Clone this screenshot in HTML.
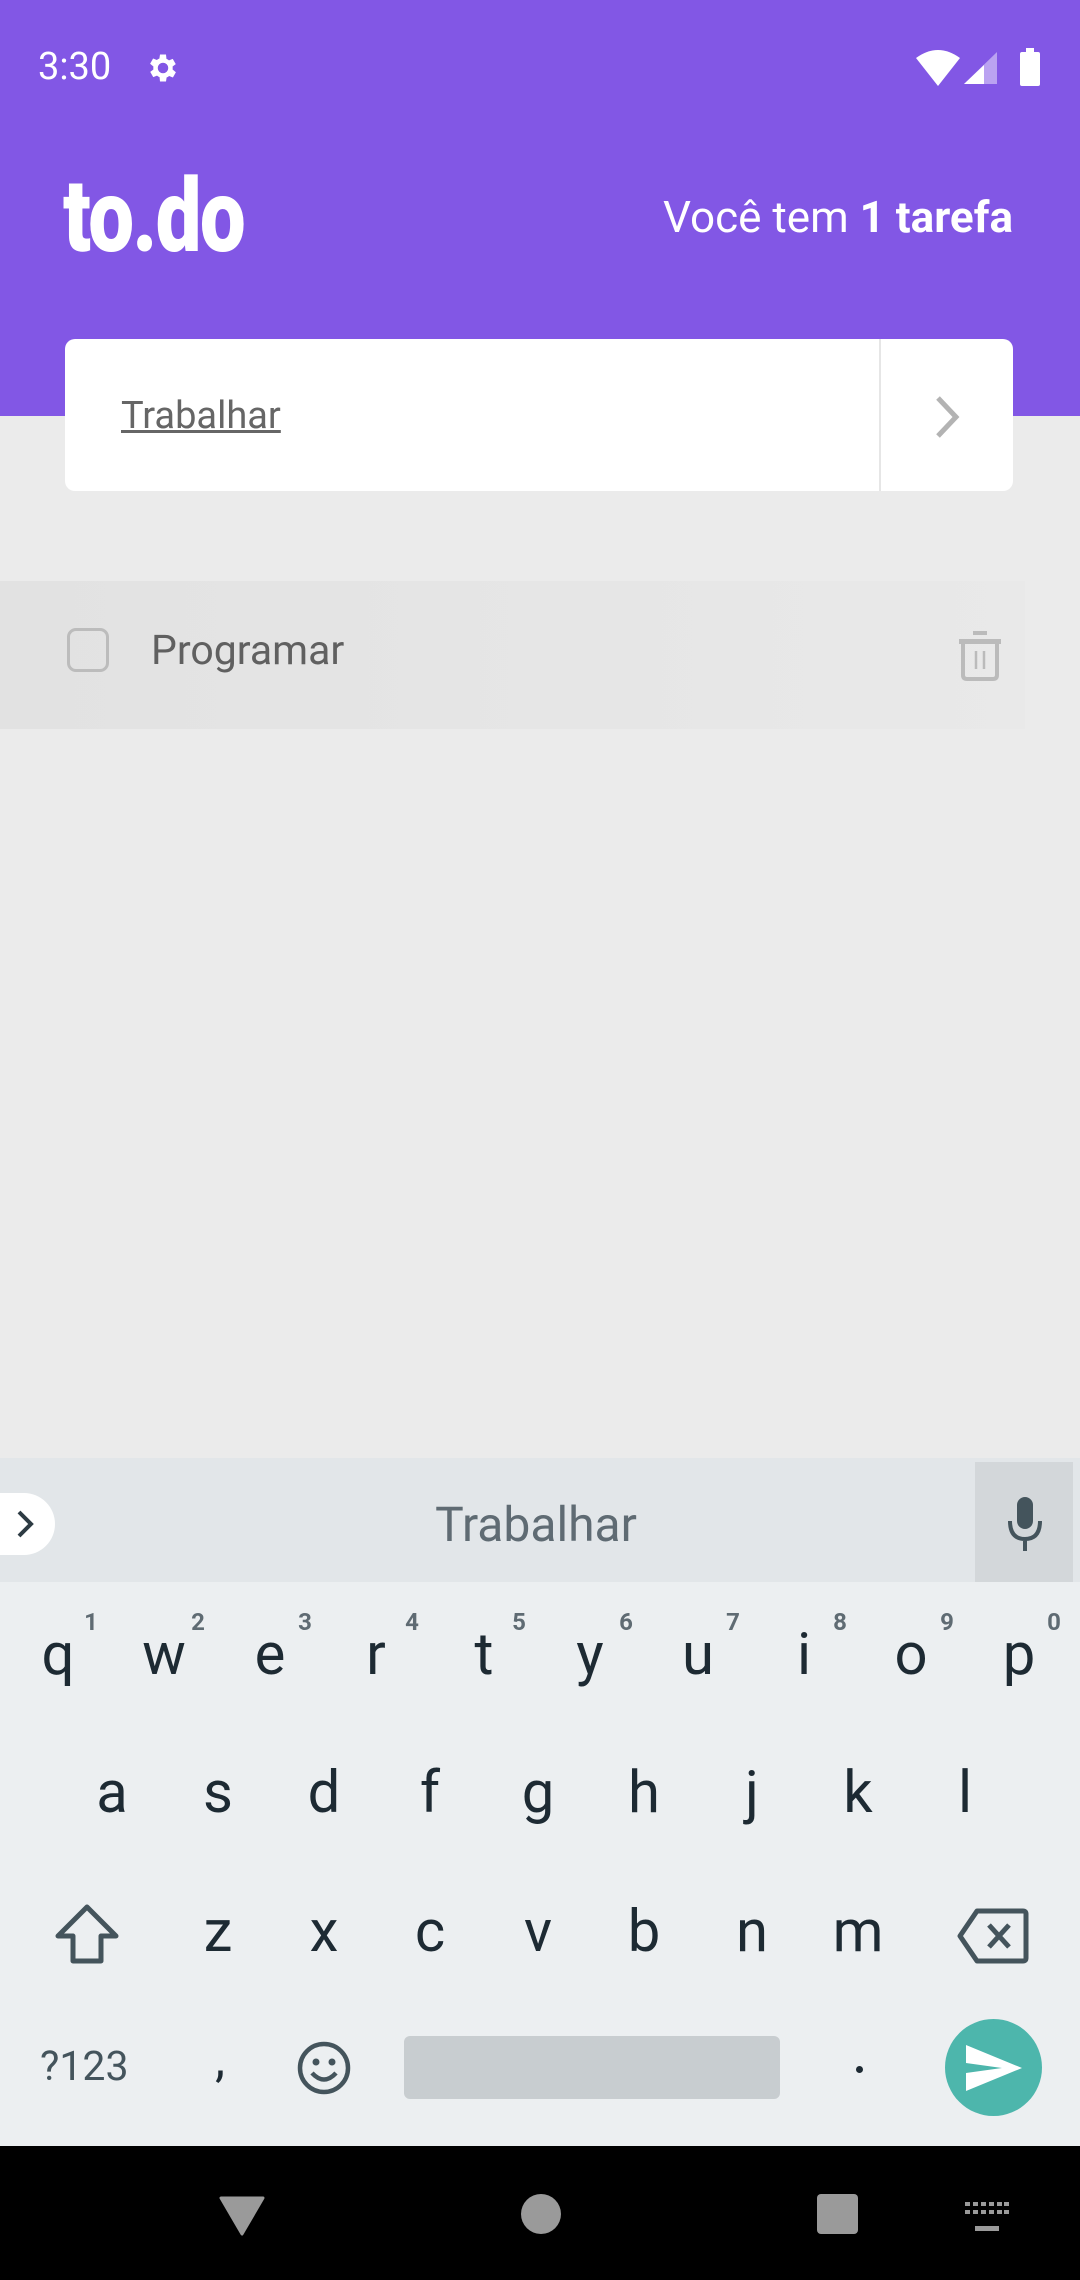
<!DOCTYPE html>
<html><head><meta charset="utf-8"><style>
*{margin:0;padding:0;box-sizing:border-box}
body{width:1080px;height:2280px;position:relative;background:#ebebeb;font-family:"Roboto","Liberation Sans",sans-serif;overflow:hidden}
.a{position:absolute}
.k{position:absolute;font-size:58px;color:#1d2a33;transform:translate(-50%,-50%);line-height:1}
.n{position:absolute;font-size:24px;color:#5f6b73;transform:translate(-50%,-50%);line-height:1;font-weight:bold}
</style></head><body>
<div class="a" style="left:0;top:0;width:1080px;height:416px;background:#8257e5"></div>
<div class="a" style="left:38px;top:45px;font-size:38px;color:#fff">3:30</div>
<svg class="a" style="left:145px;top:50px" width="36" height="36" viewBox="0 0 24 24"><path fill="#fff" d="M19.4 13a7.5 7.5 0 0 0 0-2l2.1-1.6-2-3.5-2.5 1a7 7 0 0 0-1.7-1L15 3h-4l-.4 2.7a7 7 0 0 0-1.7 1l-2.5-1-2 3.5L6.6 11a7.5 7.5 0 0 0 0 2l-2.1 1.6 2 3.5 2.5-1a7 7 0 0 0 1.7 1L11 21h4l.4-2.7a7 7 0 0 0 1.7-1l2.5 1 2-3.5zM13 15.5a3.5 3.5 0 1 1 0-7 3.5 3.5 0 0 1 0 7z" transform="translate(-1 0)"/></svg>
<svg class="a" style="left:914px;top:48px" width="130" height="38" viewBox="0 0 130 38"><path d="M2 10 Q24 -6 46 10 L24 38Z" fill="#fff"/><path d="M50 36 L83 4 V36Z" fill="#fff" opacity=".45"/><path d="M50 36 L70 17 V36Z" fill="#fff"/><rect x="106" y="4" width="20" height="34" rx="2" fill="#fff"/><rect x="112" y="0" width="8" height="5" fill="#fff"/></svg>
<div class="a" style="left:63px;top:160px;font-size:102px;font-weight:900;color:#fff;transform:scaleX(.8);transform-origin:left;letter-spacing:-2px;line-height:1.1">to.do</div>
<div class="a" style="right:67px;top:191px;font-size:44px;color:#fff">Você tem <b>1 tarefa</b></div>
<div class="a" style="left:65px;top:339px;width:948px;height:152px;background:#fff;border-radius:10px"></div>
<div class="a" style="left:879px;top:339px;width:2px;height:152px;background:#e6e6e6"></div>
<svg class="a" style="left:930px;top:394px" width="34" height="46" viewBox="0 0 34 46"><path d="M8 4 L26 23 L8 42" stroke="#b3b3b3" stroke-width="5" fill="none"/></svg>
<div class="a" style="left:121px;top:394px;font-size:38px;color:#666;text-decoration:underline">Trabalhar</div>
<div class="a" style="left:0;top:581px;width:1025px;height:148px;background:linear-gradient(90deg,#e2e2e2,#e9e9e9)"></div>
<div class="a" style="left:67px;top:628px;width:42px;height:44px;border:3px solid #bcbcbc;border-radius:9px"></div>
<div class="a" style="left:151px;top:627px;font-size:41px;color:#606060">Programar</div>
<svg class="a" style="left:958px;top:631px" width="44" height="50" viewBox="0 0 44 50"><rect x="15" y="0" width="14" height="4" fill="#bbb"/><rect x="1" y="8" width="42" height="5" fill="#bbb"/><path d="M5 13 V44 Q5 48 9 48 H35 Q39 48 39 44 V13" stroke="#bbb" stroke-width="4" fill="none"/><path d="M18 20V38M26 20V38" stroke="#bbb" stroke-width="2.5"/></svg>

<div class="a" style="left:0;top:1458px;width:1080px;height:124px;background:#e2e6e9"></div>
<div class="a" style="left:975px;top:1462px;width:98px;height:120px;background:#d3d7da"></div>
<svg class="a" style="left:1005px;top:1495px" width="40" height="60" viewBox="0 0 40 60"><rect x="12" y="2" width="16" height="32" rx="8" fill="#44545c"/><path d="M5 26 Q5 44 20 44 Q35 44 35 26 M20 44 V56" stroke="#44545c" stroke-width="4" fill="none"/></svg>
<div class="a" style="left:-30px;top:1493px;width:85px;height:62px;background:#fff;border-radius:31px"></div>
<svg class="a" style="left:14px;top:1508px" width="24" height="32" viewBox="0 0 24 32"><path d="M5 4 L17 16 L5 28" stroke="#2d3b43" stroke-width="4" fill="none"/></svg>
<div class="a" style="left:0;top:1496px;width:1072px;text-align:center;font-size:48px;color:#5f6b73">Trabalhar</div>
<div class="a" style="left:0;top:1582px;width:1080px;height:564px;background:#eceff1"></div>

<div class="k" style="left:58px;top:1655px">q</div><div class="k" style="left:164px;top:1655px">w</div><div class="k" style="left:270px;top:1655px">e</div><div class="k" style="left:376px;top:1655px">r</div><div class="k" style="left:484px;top:1655px">t</div><div class="k" style="left:590px;top:1655px">y</div><div class="k" style="left:698px;top:1655px">u</div><div class="k" style="left:804px;top:1655px">i</div><div class="k" style="left:911px;top:1655px">o</div><div class="k" style="left:1019px;top:1655px">p</div>
<div class="n" style="left:91px;top:1622px">1</div><div class="n" style="left:198px;top:1622px">2</div><div class="n" style="left:305px;top:1622px">3</div><div class="n" style="left:412px;top:1622px">4</div><div class="n" style="left:519px;top:1622px">5</div><div class="n" style="left:626px;top:1622px">6</div><div class="n" style="left:733px;top:1622px">7</div><div class="n" style="left:840px;top:1622px">8</div><div class="n" style="left:947px;top:1622px">9</div><div class="n" style="left:1054px;top:1622px">0</div>
<div class="k" style="left:112px;top:1793px">a</div><div class="k" style="left:218px;top:1793px">s</div><div class="k" style="left:324px;top:1793px">d</div><div class="k" style="left:430px;top:1793px">f</div><div class="k" style="left:538px;top:1793px">g</div><div class="k" style="left:644px;top:1793px">h</div><div class="k" style="left:752px;top:1793px">j</div><div class="k" style="left:858px;top:1793px">k</div><div class="k" style="left:965px;top:1793px">l</div>
<svg class="a" style="left:54px;top:1903px" width="66" height="62" viewBox="0 0 66 62"><path d="M33 4 L62 33 H47 V58 H19 V33 H4 Z" stroke="#44545c" stroke-width="5" fill="none" stroke-linejoin="round"/></svg>
<div class="k" style="left:218px;top:1932px">z</div><div class="k" style="left:324px;top:1932px">x</div><div class="k" style="left:430px;top:1932px">c</div><div class="k" style="left:538px;top:1932px">v</div><div class="k" style="left:644px;top:1932px">b</div><div class="k" style="left:752px;top:1932px">n</div><div class="k" style="left:858px;top:1932px">m</div>
<svg class="a" style="left:957px;top:1908px" width="72" height="56" viewBox="0 0 72 56"><path d="M20 3 H66 Q69 3 69 6 V50 Q69 53 66 53 H20 L3 28 Z" stroke="#44545c" stroke-width="5" fill="none" stroke-linejoin="round"/><path d="M32 17 L52 39 M52 17 L32 39" stroke="#44545c" stroke-width="5"/></svg>
<div class="a" style="left:40px;top:2043px;font-size:41px;color:#44545c">?123</div>
<div class="k" style="left:220px;top:2060px;font-size:50px">,</div>
<svg class="a" style="left:296px;top:2040px" width="56" height="56" viewBox="0 0 56 56"><circle cx="28" cy="28" r="24" stroke="#44545c" stroke-width="4.5" fill="none"/><circle cx="20" cy="22" r="3.5" fill="#44545c"/><circle cx="36" cy="22" r="3.5" fill="#44545c"/><path d="M16 33 Q28 46 40 33" stroke="#44545c" stroke-width="4.5" fill="none"/></svg>
<div class="a" style="left:404px;top:2036px;width:376px;height:63px;background:#c8cdd0;border-radius:6px"></div>
<div class="a" style="left:856px;top:2066px;width:7px;height:7px;background:#1d2a33;border-radius:50%"></div>
<div class="a" style="left:945px;top:2019px;width:97px;height:97px;background:#4db6ac;border-radius:50%"></div>
<svg class="a" style="left:964px;top:2043px" width="60" height="50" viewBox="0 0 60 50"><path d="M2 2 L58 25 L2 48 L2 30 L38 25 L2 20Z" fill="#fff"/></svg>

<div class="a" style="left:0;top:2146px;width:1080px;height:134px;background:#000"></div>
<svg class="a" style="left:219px;top:2196px" width="46" height="40" viewBox="0 0 46 40"><path d="M2 2 H44 L23 38Z" fill="#9a9a9a" stroke="#9a9a9a" stroke-width="3" stroke-linejoin="round"/></svg>
<div class="a" style="left:521px;top:2194px;width:40px;height:40px;background:#9a9a9a;border-radius:50%"></div>
<div class="a" style="left:817px;top:2194px;width:41px;height:40px;background:#9a9a9a;border-radius:4px"></div>
<svg class="a" style="left:965px;top:2202px" width="44" height="32" viewBox="0 0 44 32"><g fill="#9a9a9a"><rect x="0" y="0" width="5" height="4"/><rect x="8" y="0" width="5" height="4"/><rect x="16" y="0" width="5" height="4"/><rect x="24" y="0" width="5" height="4"/><rect x="32" y="0" width="5" height="4"/><rect x="39" y="0" width="5" height="4"/><rect x="0" y="8" width="5" height="4"/><rect x="8" y="8" width="5" height="4"/><rect x="16" y="8" width="5" height="4"/><rect x="24" y="8" width="5" height="4"/><rect x="32" y="8" width="5" height="4"/><rect x="39" y="8" width="5" height="4"/><rect x="10" y="24" width="24" height="5"/></g></svg>
</body></html>
